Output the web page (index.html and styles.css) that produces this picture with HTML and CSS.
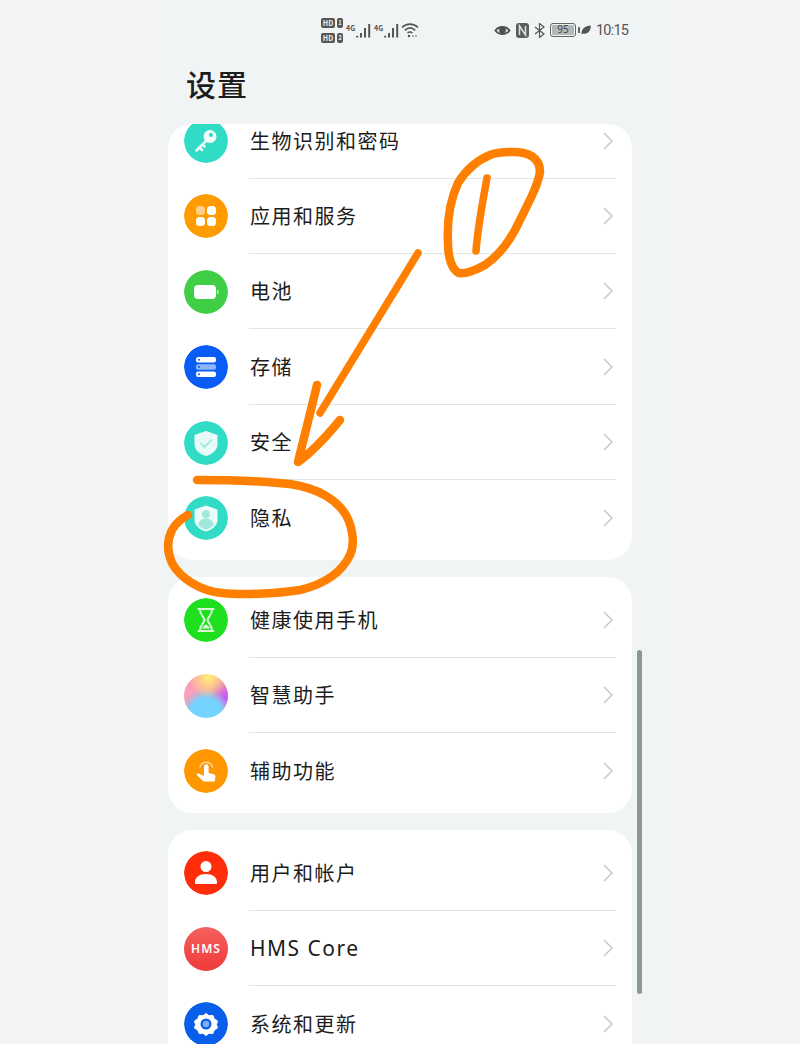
FILE: index.html
```html
<!DOCTYPE html>
<html lang="zh">
	<head>
		<meta charset="UTF-8">
		<meta name="viewport" content="width=device-width, initial-scale=1">
		<title>设置</title>
		<link rel="stylesheet" href="styles.css">
	</head>
	<body>
		<div class="phone">
			<div class="status">
				<div class="sims">
					<div class="sim"><span class="hd">HD</span><span class="slot">1</span></div>
					<div class="sim"><span class="hd">HD</span><span class="slot">2</span></div>
				</div>
				<div class="signal">
					<span class="net">4G</span>
					<svg width="15" height="15" viewBox="0 0 15 15"><path d="M1.200 14.500v-1.800M5 14.500v-4.500M9 14.500V5M13.200 14.500V1" fill="none" stroke="#555" stroke-width="2"/></svg>
				</div>
				<div class="signal">
					<span class="net">4G</span>
					<svg width="15" height="15" viewBox="0 0 15 15"><path d="M1.200 14.500v-1.800M5 14.500v-4.500M9 14.500V5M13.200 14.500V1" fill="none" stroke="#555" stroke-width="2"/></svg>
				</div>
				<svg class="wifi" width="18" height="16" viewBox="0 0 18 16" fill="none" stroke="#555" stroke-width="1.600"><path d="M1 5.500C5.500 1 12.500 1 17 5.500"/><path d="M3.800 8.300C7 5.300 11 5.300 14.200 8.300"/><path d="M6.500 11c1.600-1.300 3.400-1.300 5 0"/><circle cx="8" cy="14" r="1.200" fill="#555" stroke="none"/><circle cx="12" cy="14" r=".8" fill="#555" stroke="none"/><circle cx="15" cy="14" r=".8" fill="#555" stroke="none"/></svg>
				<div class="status-right">
					<svg width="17" height="13" viewBox="0 0 17 13"><path d="M.3 6.500C4 .6 13 .6 16.700 6.500 13 12.400 4 12.400 .3 6.500z" fill="#4f4f4f"/><path d="M2.500 6.500C5.500 3 11.500 3 14.500 6.500 11.500 10 5.500 10 2.500 6.500z" fill="#dfe3e4"/><circle cx="8.500" cy="6.300" r="3.300" fill="#4f4f4f"/></svg>
					<svg width="13" height="15" viewBox="0 0 13 15"><rect width="13" height="15" rx="3" fill="#5c5c5c"/><path d="M3.500 12V3l6 9V3" fill="none" stroke="#dfe3e4" stroke-width="1.500"/></svg>
					<svg width="11" height="15" viewBox="0 0 11 15" fill="none" stroke="#555" stroke-width="1.200"><path d="M1 4l9 7-4.500 3.500v-14L10 4l-9 7"/></svg>
					<div class="battery"><span class="battery-level">95</span></div>
					<svg class="leaf" width="10" height="10" viewBox="0 0 10 10"><path d="M.5 9.500C0 4 4 .5 9.800.5 10 6 6 9.800 1.800 8.500z" fill="#555"/></svg>
					<span class="time">10:15</span>
				</div>
			</div>
			<h1 class="title">设置</h1>
			<div class="list">
				<section class="card card-scrolled">
					<div class="row">
						<svg class="icon" viewBox="0 0 44 44"><circle cx="22" cy="22" r="22" fill="#30dcc5"/><path d="M24 20L12.500 31.500M15.500 28.500l2.500 2.500M18.500 25.500l2 2" fill="none" stroke="#f2fdfb" stroke-width="2.500" stroke-linecap="round"/><circle cx="26" cy="17.500" r="6.500" fill="#f2fdfb"/><circle cx="27" cy="16" r="2.100" fill="#30dcc5"/></svg>
						<div class="row-body"><span class="label">生物识别和密码</span><svg class="chevron" viewBox="0 0 10 18"><path d="M1 1l8 8-8 8"/></svg></div>
					</div>
					<div class="row">
						<svg class="icon" viewBox="0 0 44 44"><circle cx="22" cy="22" r="22" fill="#ff9a00"/><rect x="12" y="12" width="9" height="9" rx="3.500" fill="#ffd08a"/><rect x="23" y="12" width="9" height="9" rx="3.500" fill="#fff"/><rect x="12" y="23" width="9" height="9" rx="3.500" fill="#fff"/><rect x="23" y="23" width="9" height="9" rx="3.500" fill="#fff"/></svg>
						<div class="row-body"><span class="label">应用和服务</span><svg class="chevron" viewBox="0 0 10 18"><path d="M1 1l8 8-8 8"/></svg></div>
					</div>
					<div class="row">
						<svg class="icon" viewBox="0 0 44 44"><circle cx="22" cy="22" r="22" fill="#3fce46"/><rect x="10" y="15" width="22" height="14" rx="4" fill="#fff"/><rect x="33" y="20" width="1.500" height="4" fill="#bfeec1"/></svg>
						<div class="row-body"><span class="label">电池</span><svg class="chevron" viewBox="0 0 10 18"><path d="M1 1l8 8-8 8"/></svg></div>
					</div>
					<div class="row">
						<svg class="icon" viewBox="0 0 44 44"><circle cx="22" cy="22" r="22" fill="#0a5cf6"/><rect x="12" y="12" width="20" height="5.500" rx="2" fill="#fff"/><rect x="12" y="19.200" width="20" height="5.500" rx="2" fill="#8fb6fb"/><rect x="12" y="26.500" width="20" height="5.500" rx="2" fill="#fff"/><circle cx="15" cy="14.700" r="1" fill="#0a5cf6"/><circle cx="15" cy="22" r="1" fill="#0a5cf6"/><circle cx="15" cy="29.200" r="1" fill="#0a5cf6"/></svg>
						<div class="row-body"><span class="label">存储</span><svg class="chevron" viewBox="0 0 10 18"><path d="M1 1l8 8-8 8"/></svg></div>
					</div>
					<div class="row">
						<svg class="icon" viewBox="0 0 44 44"><circle cx="22" cy="22" r="22" fill="#30dcc5"/><path d="M22 10l11.500 4v9c0 6-5 10-11.500 12-6.500-2-11.500-6-11.500-12v-9z" fill="#e9fbf8"/><path d="M16.500 22l4 4 7.500-7.500" fill="none" stroke="#a5ebe0" stroke-width="2"/></svg>
						<div class="row-body"><span class="label">安全</span><svg class="chevron" viewBox="0 0 10 18"><path d="M1 1l8 8-8 8"/></svg></div>
					</div>
					<div class="row">
						<svg class="icon" viewBox="0 0 44 44"><circle cx="22" cy="22" r="22" fill="#30dcc5"/><path d="M22 9.500l11.500 4v10c0 6-5 10-11.500 12-6.500-2-11.500-6-11.500-12v-10z" fill="#eafbf8"/><circle cx="22" cy="18" r="4" fill="#9fe9dd"/><path d="M14.500 29c0-9 15-9 15 0-2 2.500-5 4-7.500 4.800-2.500-.8-5.500-2.300-7.500-4.800z" fill="#9fe9dd"/></svg>
						<div class="row-body row-last"><span class="label">隐私</span><svg class="chevron" viewBox="0 0 10 18"><path d="M1 1l8 8-8 8"/></svg></div>
					</div>
				</section>
				<section class="card">
					<div class="row">
						<svg class="icon" viewBox="0 0 44 44"><circle cx="22" cy="22" r="22" fill="#1ee01e"/><path d="M14.500 11h15M14.500 33h15M16 11.500c0 6 4 7 4.500 10.500-.5 3.500-4.500 4.500-4.500 10.500M28 11.500c0 6-4 7-4.500 10.500.5 3.500 4.500 4.500 4.500 10.500" fill="none" stroke="#d8f8d8" stroke-width="2" stroke-linecap="round"/><path d="M18 30.500c1-2.500 3-3.500 4-4 1 .5 3 1.500 4 4z" fill="#d8f8d8"/></svg>
						<div class="row-body"><span class="label">健康使用手机</span><svg class="chevron" viewBox="0 0 10 18"><path d="M1 1l8 8-8 8"/></svg></div>
					</div>
					<div class="row">
						<span class="icon orb"></span>
						<div class="row-body"><span class="label">智慧助手</span><svg class="chevron" viewBox="0 0 10 18"><path d="M1 1l8 8-8 8"/></svg></div>
					</div>
					<div class="row">
						<svg class="icon" viewBox="0 0 44 44"><circle cx="22" cy="22" r="22" fill="#ff9800"/><path d="M16 18a6.500 6.500 0 0 1 12.500 0" fill="none" stroke="#ffd9a0" stroke-width="1.500" stroke-linecap="round"/><path d="M20 17.500a2.300 2.300 0 0 1 4.600 0v6.500l5 1.200c1.400.4 2 1.300 1.800 2.600l-.8 4.700H19.500l-6.500-6.200c-.9-1 .4-2.500 1.700-1.800l5.300 2.500z" fill="#fff"/></svg>
						<div class="row-body row-last"><span class="label">辅助功能</span><svg class="chevron" viewBox="0 0 10 18"><path d="M1 1l8 8-8 8"/></svg></div>
					</div>
				</section>
				<section class="card">
					<div class="row">
						<svg class="icon" viewBox="0 0 44 44"><circle cx="22" cy="22" r="22" fill="#ff2d0a"/><circle cx="22" cy="15.500" r="5.500" fill="#fff"/><path d="M11 32c-.5-6 5-9 11-9s11.500 3 11 9c0 .6-.5 1-1 1H12c-.5 0-1-.4-1-1z" fill="#fff"/></svg>
						<div class="row-body"><span class="label">用户和帐户</span><svg class="chevron" viewBox="0 0 10 18"><path d="M1 1l8 8-8 8"/></svg></div>
					</div>
					<div class="row">
						<span class="icon hms">HMS</span>
						<div class="row-body"><span class="label label-latin">HMS Core</span><svg class="chevron" viewBox="0 0 10 18"><path d="M1 1l8 8-8 8"/></svg></div>
					</div>
					<div class="row">
						<svg class="icon" viewBox="0 0 44 44"><circle cx="22" cy="22" r="22" fill="#0a5fea"/><path d="M22 11.500l3 2.300 3.800-.4 1.500 3.500 3.200 2.100-1 3.500 1 3.500-3.200 2.100-1.500 3.500-3.800-.4-3 2.300-3-2.300-3.800.4-1.500-3.500-3.200-2.100 1-3.500-1-3.500 3.200-2.100 1.500-3.500 3.800.4z" fill="#fff" stroke="#fff" stroke-linejoin="round"/><circle cx="22" cy="22" r="5.500" fill="#0a5fea"/><circle cx="22" cy="22" r="3.200" fill="#7fb0f5"/></svg>
						<div class="row-body row-last"><span class="label">系统和更新</span><svg class="chevron" viewBox="0 0 10 18"><path d="M1 1l8 8-8 8"/></svg></div>
					</div>
				</section>
			</div>
			<div class="scrollbar"></div>
		</div>
		<!-- hand drawn marks on top of the screenshot -->
		<svg class="marks" viewBox="0 0 800 1044" fill="none" stroke="#ff7f00" stroke-width="8.500" stroke-linecap="round" stroke-linejoin="round">
			<path d="M513 152C528 152 540 157 540 172C538 185 530 200 515 230C507 245 498 256 485 265C474 271 464 274 459 273C452 270 448 258 448 243C447 225 448 205 458 183C466 170 478 160 490 155C497 152 505 152 513 152Z"/>
			<path d="M487 178C483 200 478 225 476 251" stroke-width="7.500"/>
			<path d="M418 253L320 413" stroke-width="7.500"/>
			<path d="M317 385C311 410 304 438 298 462C312 452 326 437 340 420"/>
			<path d="M197 480C225 480 262 481 290 484C318 488 337 500 346 515C353 528 355 545 350 555C342 572 325 584 300 590C275 594 240 595 222 593C200 591 180 578 172 563C167 552 167 540 172 530C176 523 182 518 188 515"/>
		</svg>
	</body>
</html>
```

FILE: styles.css
```css
*, *:before, *:after {
	box-sizing: border-box;
}
html {
	font-family: "Noto Sans CJK SC", "Noto Sans", sans-serif;
	font-weight: 400;
}
body {
	background: #f2f3f3;
	color: #1c1c1c;
	margin: 0;
	height: 1044px;
	overflow: hidden;
	position: relative;
}
.phone {
	position: relative;
	width: 500px;
	height: 1044px;
	margin-left: 160px;
	background: #f1f4f5;
	overflow: hidden;
}
.status {
	display: flex;
	align-items: center;
	height: 60px;
	padding: 0 32px 0 161px;
	color: #555;
}
.sims {
	display: flex;
	flex-direction: column;
	gap: 5px;
}
.sim {
	display: flex;
	gap: 2px;
}
.hd, .slot {
	background: #555;
	color: #eef1f3;
	border-radius: 2px;
	font-size: 7px;
	font-weight: 700;
	line-height: 10px;
	height: 10px;
	text-align: center;
}
.hd {
	width: 14px;
}
.slot {
	width: 6px;
	font-size: 6px;
}
.signal {
	display: flex;
	align-items: flex-start;
	margin-left: 3px;
}
.net {
	font-size: 7px;
	line-height: 9px;
	font-weight: 700;
	width: 9px;
	margin-top: 1px;
}
.signal svg {
	margin-left: 1px;
}
.wifi {
	margin-left: 2px;
}
.status-right {
	display: flex;
	align-items: center;
	gap: 5px;
	margin-left: auto;
}
.battery {
	position: relative;
	display: flex;
	width: 26px;
	height: 14px;
	padding: 1px;
	border: 1.5px solid #666;
	border-radius: 3px;
}
.battery:after {
	content: "";
	position: absolute;
	right: -4.5px;
	top: 2.5px;
	width: 1.5px;
	height: 6px;
	background: #666;
}
.battery-level {
	flex: 1;
	background: #b4b8b9;
	border-radius: 1px;
	font-family: "Noto Sans", sans-serif;
	font-size: 10px;
	line-height: 9px;
	text-align: center;
	color: #444;
}
.time {
	font-family: Roboto, sans-serif;
	font-size: 14.5px;
	letter-spacing: -.8px;
	line-height: 16px;
	width: 32px;
	margin-top: 1px;
	white-space: nowrap;
}
.title {
	font-size: 30px;
	font-weight: 500;
	line-height: 44px;
	letter-spacing: 1px;
	height: 64px;
	margin: 0;
	padding: 1px 0 0 26px;
}
.list {
	display: flex;
	flex-direction: column;
	gap: 17px;
	width: 464px;
	margin-left: 8px;
}
.card {
	background: #fff;
	border-radius: 24px;
	padding: 5.5px 0 4.3px;
	overflow: hidden;
}
/* list is scrolled, first row is cut by the top edge */
.card-scrolled {
	padding-top: 0;
}
.card-scrolled .row:first-child {
	margin-top: -20.7px;
}
.row {
	display: flex;
	align-items: center;
	height: 75.4px;
	padding: 0 16px;
}
.icon {
	display: block;
	flex: none;
	width: 44px;
	height: 44px;
	margin-right: 21px;
	border-radius: 50%;
}
.orb {
	background:
		radial-gradient(circle at 55% 8%, #fff07a 0, rgba(255,240,122,0) 42%),
		radial-gradient(circle at 50% 92%, #74d4ff 0, #74d4ff 34%, rgba(116,212,255,0) 56%),
		radial-gradient(circle at 98% 55%, #c050ff 0, rgba(192,80,255,0) 40%),
		radial-gradient(circle at 8% 40%, #fa9ec0 0, rgba(250,158,192,0) 60%),
		#fb9c9c;
}
.hms {
	background: linear-gradient(#f56060, #f03a3a);
	color: #fff;
	font-family: "Noto Sans", sans-serif;
	font-size: 12px;
	font-weight: 600;
	line-height: 44px;
	letter-spacing: 1px;
	text-align: center;
}
.row-body {
	display: flex;
	align-items: center;
	justify-content: space-between;
	flex: 1;
	height: 100%;
	padding-right: 3px;
	border-bottom: 1px solid #e3e4e6;
}
.row-last {
	border-bottom: 0;
}
.label {
	font-size: 20px;
	letter-spacing: 1.5px;
	line-height: 28px;
	margin-left: 1px;
}
.label-latin {
	font-family: "Noto Sans", sans-serif;
	font-size: 21px;
	letter-spacing: 1.5px;
}
.chevron {
	width: 10px;
	height: 18px;
	fill: none;
	stroke: #c5c7c9;
	stroke-width: 1.5;
}
.scrollbar {
	position: absolute;
	left: 477px;
	top: 650px;
	width: 5px;
	height: 344px;
	background: #8e9595;
	border-radius: 3px;
}
.marks {
	position: absolute;
	left: 0;
	top: 0;
	width: 800px;
	height: 1044px;
}
```
